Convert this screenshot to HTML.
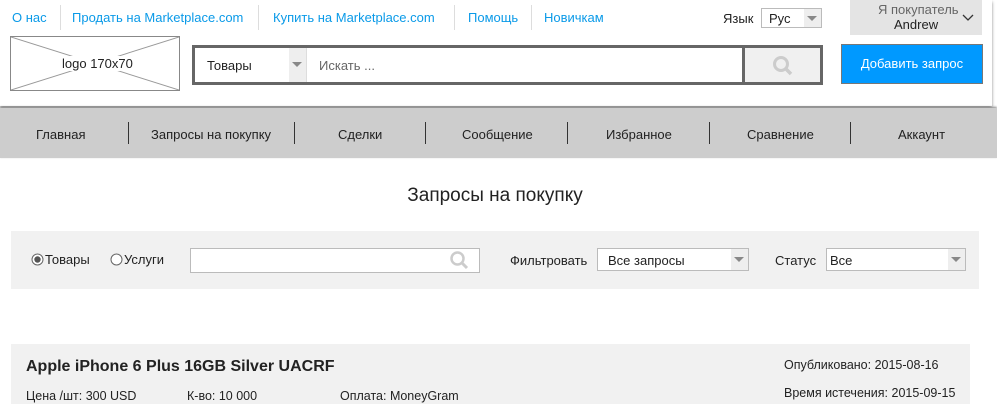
<!DOCTYPE html>
<html><head><meta charset="utf-8"><style>
*{box-sizing:border-box;margin:0;padding:0}
body{width:997px;height:400px;overflow:hidden;background:#fff;font-family:"Liberation Sans","Noto Sans CJK SC",sans-serif;font-size:13px;color:#222;position:relative}
.a{position:absolute}
.hdr{left:0;top:0;width:992px;height:106px;background:#fff;box-shadow:0 2px 3px #888}
.lnk{color:#0a9ae8;top:10px;font-size:13px}
.sep{top:5px;width:1px;height:25px;background:#ddd}
.nav{left:0;top:108px;width:997px;height:50px;background:#cdcdcd;box-shadow:0 -1px 2px #888}
.nav span{position:absolute;top:19px;font-size:13px;color:#222}
.nav i{position:absolute;top:14px;width:1px;height:22px;background:#333}
.arr{width:0;height:0;border-left:5px solid transparent;border-right:5px solid transparent;border-top:5px solid #888}
</style></head><body>
<div class="a hdr"></div>
<span class="a lnk" style="left:12px">О нас</span>
<div class="a sep" style="left:60px"></div>
<span class="a lnk" style="left:72px">Продать на Marketplace.com</span>
<div class="a sep" style="left:258px"></div>
<span class="a lnk" style="left:273px">Купить на Marketplace.com</span>
<div class="a sep" style="left:454px"></div>
<span class="a lnk" style="left:468px">Помощь</span>
<div class="a sep" style="left:531px"></div>
<span class="a lnk" style="left:544px">Новичкам</span>
<span class="a" style="left:723px;top:11px">Язык</span>
<div class="a" style="left:761px;top:8px;width:61px;height:20px;border:1px solid #bbb;background:#fff"><span class="a" style="left:7px;top:2px">Рус</span><div class="a" style="right:0;top:0;width:17px;height:18px;background:#eee"><div class="a arr" style="left:3px;top:7px"></div></div></div>
<div class="a" style="left:850px;top:0;width:132px;height:35px;background:#e4e4e4"></div>
<span class="a" style="left:878px;top:2px;color:#666">Я покупатель</span>
<span class="a" style="left:894px;top:17px;font-size:13px">Andrew</span>
<svg class="a" style="left:962px;top:14px" width="12" height="8"><path d="M1 1L6 6L11 1" stroke="#333" fill="none" stroke-width="1.3"/></svg>
<div class="a" style="left:10px;top:36px;width:170px;height:55px;border:1px solid #888"><svg class="a" style="left:0;top:0" width="168" height="53"><path d="M0 0L168 53M168 0L0 53" stroke="#999"/></svg><span class="a" style="left:48px;top:19px;background:#fff;padding:0 3px">logo 170x70</span></div>
<div class="a" style="left:192px;top:45px;width:631px;height:40px;border:3px solid #666;background:#fff"></div>
<div class="a" style="left:195px;top:48px;width:112px;height:34px;border-right:1px solid #ddd"><span class="a" style="left:12px;top:10px">Товары</span><div class="a" style="right:0;top:0;width:17px;height:34px;background:#eee"><div class="a arr" style="left:3px;top:14px"></div></div></div>
<span class="a" style="left:319px;top:58px;color:#666">Искать ...</span>
<div class="a" style="left:742px;top:48px;width:78px;height:34px;background:#f0f0f0;border-left:3px solid #666"></div>
<svg class="a" style="left:772px;top:55px" width="22" height="22"><circle cx="9" cy="9" r="6.5" stroke="#ccc" stroke-width="3" fill="none"/><path d="M13.5 13.5L19 19" stroke="#ccc" stroke-width="3.5"/></svg>
<div class="a" style="left:841px;top:44px;width:142px;height:40px;background:#0099ff;border:1px solid #777;color:#fff;text-align:center;line-height:38px">Добавить запрос</div>
<div class="a nav">
<span style="left:36px">Главная</span><i style="left:128px"></i>
<span style="left:151px">Запросы на покупку</span><i style="left:294px"></i>
<span style="left:338px">Сделки</span><i style="left:425px"></i>
<span style="left:462px">Сообщение</span><i style="left:567px"></i>
<span style="left:606px">Избранное</span><i style="left:709px"></i>
<span style="left:747px">Сравнение</span><i style="left:850px"></i>
<span style="left:898px">Аккаунт</span>
</div>
<div class="a" style="left:0;top:185px;width:990px;text-align:center;font-size:19px">Запросы на покупку</div>
<div class="a" style="left:11px;top:231px;width:968px;height:58px;background:#f1f1f1"></div>
<svg class="a" style="left:31px;top:253px" width="13" height="13"><circle cx="6.5" cy="6.5" r="5.5" stroke="#666" fill="#fff"/><circle cx="6.5" cy="6.5" r="3.2" fill="#555"/></svg>
<span class="a" style="left:45px;top:252px">Товары</span>
<svg class="a" style="left:110px;top:253px" width="13" height="13"><circle cx="6.5" cy="6.5" r="5.5" stroke="#666" fill="#fff"/></svg>
<span class="a" style="left:124px;top:252px">Услуги</span>
<div class="a" style="left:190px;top:248px;width:290px;height:25px;background:#fff;border:1px solid #bbb"></div>
<svg class="a" style="left:449px;top:250px" width="22" height="22"><circle cx="8.5" cy="8.5" r="6" stroke="#ccc" stroke-width="2.5" fill="none"/><path d="M13 13L18 18" stroke="#ccc" stroke-width="3"/></svg>
<span class="a" style="left:510px;top:253px">Фильтровать</span>
<div class="a" style="left:597px;top:248px;width:152px;height:23px;background:#fff;border:1px solid #bbb"><span class="a" style="left:10px;top:4px">Все запросы</span><div class="a" style="right:0;top:0;width:17px;height:21px;background:#eee"><div class="a arr" style="left:3px;top:8px"></div></div></div>
<span class="a" style="left:775px;top:253px">Статус</span>
<div class="a" style="left:826px;top:248px;width:140px;height:23px;background:#fff;border:1px solid #bbb"><span class="a" style="left:3px;top:4px">Все</span><div class="a" style="right:0;top:0;width:17px;height:21px;background:#eee"><div class="a arr" style="left:3px;top:8px"></div></div></div>
<div class="a" style="left:11px;top:344px;width:959px;height:60px;background:#f1f1f1"></div>
<span class="a" style="left:26px;top:358px;font-size:16px;font-weight:bold">Apple iPhone 6 Plus 16GB Silver UACRF</span>
<span class="a" style="left:26px;top:389px;font-size:12.5px">Цена /шт: 300 USD</span>
<span class="a" style="left:187px;top:389px;font-size:12.5px">К-во: 10 000</span>
<span class="a" style="left:340px;top:389px;font-size:12.5px">Оплата: MoneyGram</span>
<span class="a" style="left:784px;top:358px;font-size:12.5px">Опубликовано: 2015-08-16</span>
<span class="a" style="left:784px;top:386px;font-size:12.5px">Время истечения: 2015-09-15</span>
</body></html>
